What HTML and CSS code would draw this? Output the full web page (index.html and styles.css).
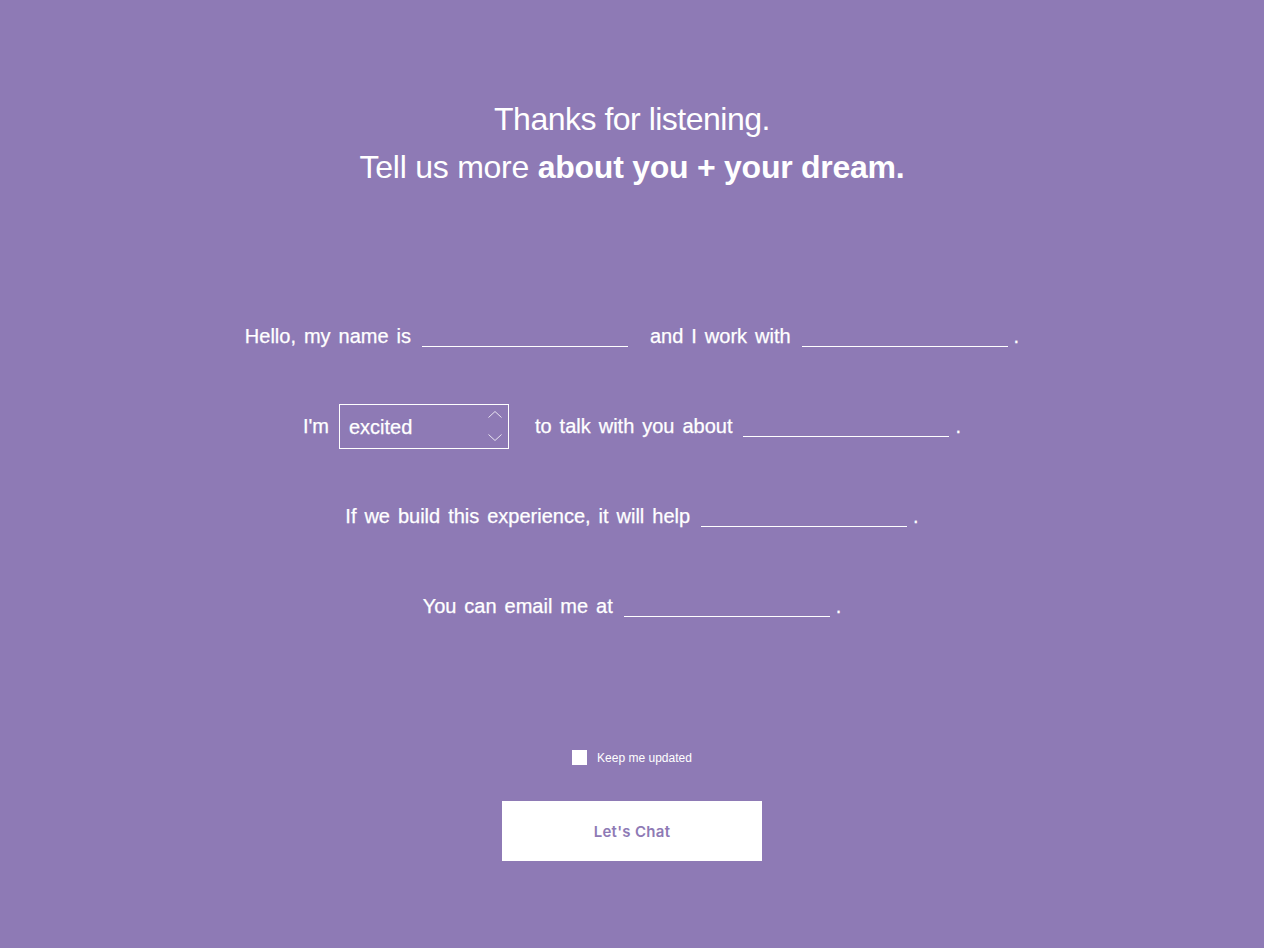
FILE: index.html
```html
<!DOCTYPE html>
<html lang="en">
<head>
<meta charset="utf-8">
<title>Tell us more</title>
<link rel="stylesheet" href="styles.css">
</head>
<body>
<main class="page">
  <header class="intro">
    <p class="intro-line">Thanks for listening.</p>
    <p class="intro-line intro-line-second">Tell us more <strong>about you + your dream.</strong></p>
  </header>

  <form class="madlib">
    <div class="row">
      <span class="words">Hello, my name is</span>
      <input class="blank" type="text" aria-label="Name">
      <span class="words words-spaced">and I work with</span>
      <input class="blank" type="text" aria-label="Company">
      <span class="dot">.</span>
    </div>
    <div class="row">
      <span class="words">I'm</span>
      <div class="select-wrap">
        <select class="mood" aria-label="Mood">
          <option>excited</option>
          <option>curious</option>
          <option>ready</option>
        </select>
        <svg class="spinner" width="16" height="34" viewBox="0 0 16 34" aria-hidden="true">
          <path d="M1.5 8.5 L8 2.5 L14.5 8.5" fill="none" stroke="#ffffff" stroke-opacity="0.8" stroke-width="1"/>
          <path d="M1.5 25.5 L8 31.5 L14.5 25.5" fill="none" stroke="#ffffff" stroke-opacity="0.8" stroke-width="1"/>
        </svg>
      </div>
      <span class="words words-spaced">to talk with you about</span>
      <input class="blank" type="text" aria-label="Topic">
      <span class="dot">.</span>
    </div>
    <div class="row">
      <span class="words">If we build this experience, it will help</span>
      <input class="blank" type="text" aria-label="Who it helps">
      <span class="dot">.</span>
    </div>
    <div class="row">
      <span class="words">You can email me at</span>
      <input class="blank" type="email" aria-label="Email">
      <span class="dot">.</span>
    </div>

    <label class="keep">
      <span class="box"></span>
      <span class="keep-text">Keep me updated</span>
    </label>

    <div class="actions">
      <button class="chat" type="button">Let's Chat</button>
    </div>
  </form>
</main>
</body>
</html>
```

FILE: styles.css
```css
* {
  box-sizing: border-box;
}

html,
body {
  margin: 0;
  padding: 0;
}

body {
  background: #8e7ab5;
  color: #ffffff;
  font-family: "Liberation Sans", Arial, Helvetica, sans-serif;
  min-height: 948px;
}

.page {
  display: flex;
  flex-direction: column;
  align-items: center;
  padding-top: 95px;
}

.intro {
  text-align: center;
}

.intro-line {
  margin: 0;
  font-size: 32px;
  line-height: 48px;
  letter-spacing: -0.5px;
  font-weight: 400;
}

.intro-line-second {
  letter-spacing: -0.25px;
}

.intro-line strong {
  font-weight: 700;
}

.madlib {
  margin-top: 123px;
  display: flex;
  flex-direction: column;
  align-items: center;
  gap: 45px;
}

.row {
  display: flex;
  align-items: center;
  justify-content: center;
  height: 45px;
  font-size: 20px;
  word-spacing: 2.4px;
  -webkit-text-stroke: 0.25px #ffffff;
}

.words {
  white-space: pre;
  margin-right: 11px;
}

.words-spaced {
  margin-left: 22px;
}

.select-wrap + .words-spaced {
  margin-left: 26px;
}

.blank {
  width: 206px;
  height: 20px;
  padding: 0;
  border: none;
  border-bottom: 1px solid #ffffff;
  background: transparent;
  color: #ffffff;
  font: inherit;
  outline: none;
}

.dot {
  margin-left: 6px;
}

.select-wrap {
  position: relative;
  width: 170px;
  height: 45px;
  margin-left: -1px;
}

.mood {
  appearance: none;
  -webkit-appearance: none;
  width: 100%;
  height: 100%;
  padding: 0 30px 0 9px;
  border: 1px solid #ffffff;
  border-radius: 0;
  background: transparent;
  color: #ffffff;
  font-family: "Liberation Sans", Arial, sans-serif;
  font-size: 20px;
  outline: none;
}

.spinner {
  position: absolute;
  right: 6px;
  top: 5px;
}

.keep {
  margin-top: 76px;
  display: flex;
  align-items: center;
  gap: 10px;
  font-size: 12px;
}

.box {
  display: block;
  width: 15px;
  height: 15px;
  background: #ffffff;
}

.actions {
  margin-top: -9px;
}

.chat {
  display: block;
  width: 260px;
  height: 60px;
  border: none;
  background: #ffffff;
  color: #8e7ab5;
  font-family: Inter, "Liberation Sans", sans-serif;
  font-weight: 600;
  font-size: 15px;
  letter-spacing: 0.3px;
}
```
